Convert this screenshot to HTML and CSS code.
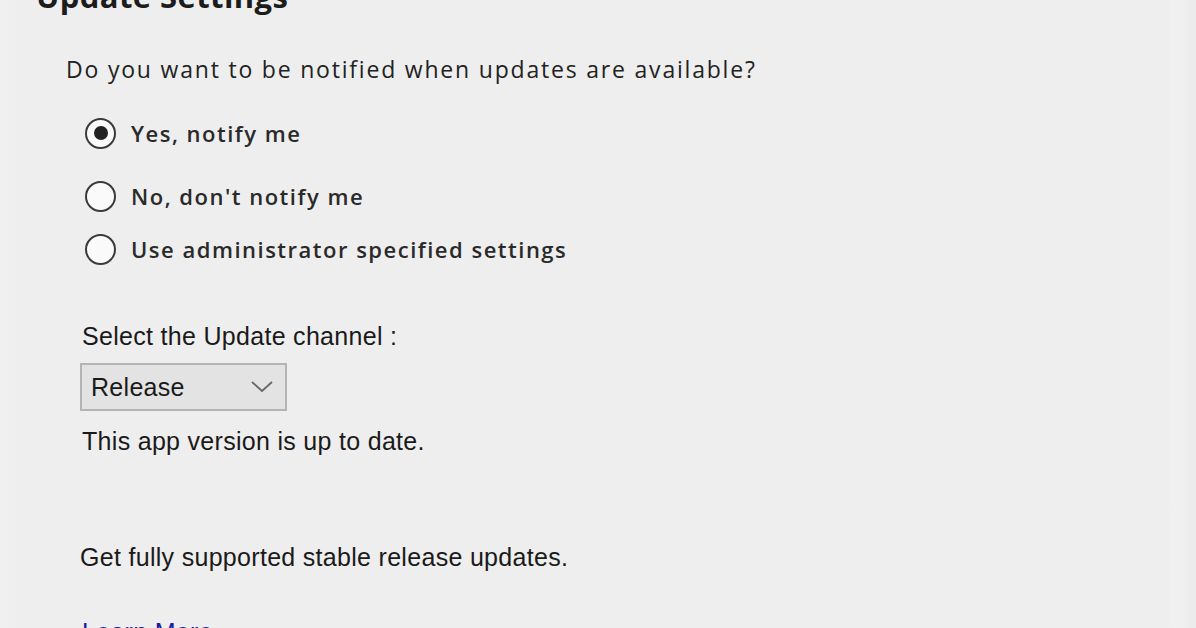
FILE: index.html
```html
<!DOCTYPE html>
<html>
<head>
<meta charset="utf-8">
<link rel="stylesheet" href="styles.css">
</head>
<body>
<div class="page">
  <h1 class="title">Update Settings</h1>
  <p class="question">Do you want to be notified when updates are available?</p>
  <div class="radios">
    <label class="radio r1"><span class="circle checked"></span><span class="rlabel">Yes, notify me</span></label>
    <label class="radio r2"><span class="circle"></span><span class="rlabel">No, don't notify me</span></label>
    <label class="radio r3"><span class="circle"></span><span class="rlabel">Use administrator specified settings</span></label>
  </div>
  <div class="channel">
    <div class="clabel">Select the Update channel :</div>
    <div class="select"><span class="sval">Release</span><svg class="chev" width="22" height="12" viewBox="0 0 22 12"><path d="M1 1 L11 10 L21 1" fill="none" stroke="#666" stroke-width="1.8"/></svg></div>
    <div class="status">This app version is up to date.</div>
    <div class="desc">Get fully supported stable release updates.</div>
    <a class="link" href="#">Learn More</a>
  </div>
</div>
</body>
</html>
```

FILE: styles.css
```css
html, body {
  margin: 0;
  padding: 0;
  background: #eeeeee;
  overflow: hidden;
  height: 628px;
}
.page {
  display: flow-root;
  padding-left: 36px;
  background: linear-gradient(to right, #f0f0f0 0, #eeeeee 24px, #eeeeee 1166px, #f0f0f0 1172px, #f0f0f0 1182px, #ececec 1190px);
  height: 628px;
}
.title {
  font-family: "Open Sans", sans-serif;
  font-weight: 700;
  font-size: 31px;
  line-height: 36px;
  letter-spacing: 0.4px;
  margin: -22px 0 0 0;
  color: #1c1c1c;
}
.question {
  font-family: "Open Sans", sans-serif;
  font-size: 23px;
  font-weight: 500;
  line-height: 30px;
  letter-spacing: 1.8px;
  margin: 40px 0 0 30px;
  color: #222;
}
.radios {
  margin-left: 49px;
}
.radio {
  display: flex;
  align-items: center;
  height: 36px;
  gap: 15px;
}
.r1 { margin-top: 31px; }
.r2 { margin-top: 27px; }
.r3 { margin-top: 17px; }
.circle {
  box-sizing: border-box;
  width: 31px;
  height: 31px;
  border: 2.5px solid #3a3a3a;
  border-radius: 50%;
  background: #fafafa;
  display: flex;
  align-items: center;
  justify-content: center;
}
.circle.checked::after {
  content: "";
  width: 14px;
  height: 14px;
  border-radius: 50%;
  background: #222;
}
.rlabel {
  font-family: "Open Sans", sans-serif;
  font-weight: 600;
  font-size: 22px;
  letter-spacing: 1.5px;
  color: #2a2a2a;
}
.channel {
  margin-left: 44px;
  font-family: "Liberation Sans", Arial, sans-serif;
  font-size: 25px;
  color: #1a1a1a;
  letter-spacing: 0.3px;
}
.clabel {
  line-height: 30px;
  margin-top: 54px;
  padding-left: 2px;
}
.select {
  box-sizing: border-box;
  margin-top: 12px;
  width: 207px;
  height: 48px;
  border: 2px solid #b4b4b4;
  background: #e3e3e3;
  display: flex;
  align-items: center;
  justify-content: space-between;
  padding: 0 12px 0 9px;
}
.chev { display: block; }
.status {
  line-height: 30px;
  margin-top: 15px;
  padding-left: 2px;
}
.desc {
  line-height: 30px;
  margin-top: 86px;
}
.link {
  display: block;
  line-height: 30px;
  margin-top: 45px;
  padding-left: 2px;
  color: #1a1aa8;
  text-decoration: none;
}
```
